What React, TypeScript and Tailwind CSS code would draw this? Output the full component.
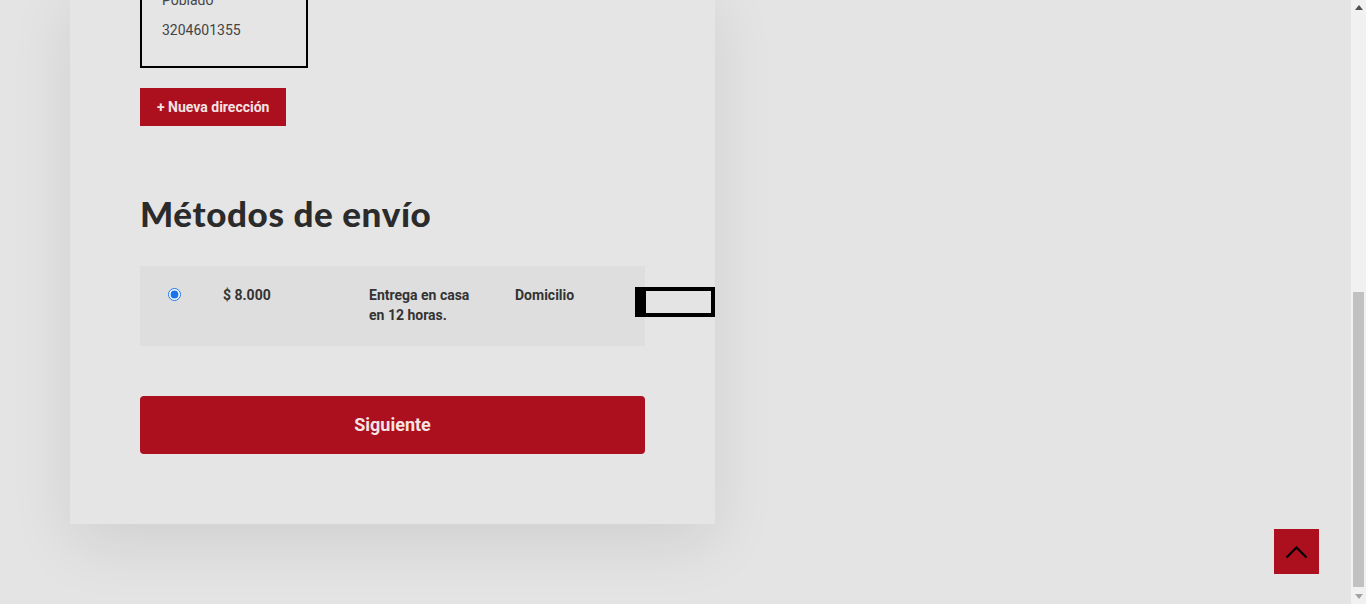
import { useState } from "react";

const font = { roboto: "font-['Roboto',_'Liberation_Sans',_sans-serif]" };

const ScrollTop = () => (
  <button className="absolute right-[32px] bottom-[30px] w-[45px] h-[45px] bg-[#ac0f1d] flex items-center justify-center">
    <svg width="23" height="14" viewBox="0 0 23 14" fill="none">
      <polyline points="1.5,12.5 11.5,2.5 21.5,12.5" stroke="#000" strokeWidth="2.2" />
    </svg>
  </button>
);

const Scrollbar = () => (
  <div className="w-[15px] shrink-0 bg-[#f1f1f1] flex flex-col">
    <div className="h-[15px] flex items-center justify-center">
      <svg width="8" height="5" viewBox="0 0 8 5">
        <polygon points="0,5 4,0 8,5" fill="#505050" />
      </svg>
    </div>
    <div className="flex-1 flex flex-col px-[2px] pt-[277px] pb-[2px]">
      <div className="h-[295px] bg-[#c1c1c1]" />
    </div>
    <div className="h-[15px] flex items-center justify-center">
      <svg width="8" height="5" viewBox="0 0 8 5">
        <polygon points="0,0 8,0 4,5" fill="#a3a3a3" />
      </svg>
    </div>
  </div>
);

const App = () => {
  const [shipping, setShipping] = useState("domicilio");

  return (
    <div className={`flex h-[604px] overflow-hidden bg-[#e4e4e4] ${font.roboto}`}>
      <div className="relative flex-1">
        <div className="pl-[70px] -mt-[17px]">
          <div className="w-[645px] bg-[#e5e5e5] px-[70px] pb-[70px] flex flex-col items-start shadow-[0_20px_60px_rgba(0,0,0,0.09)]">
            {/* Address card */}
            <div className="w-[168px] border-2 border-black px-5 pb-[21px] text-sm leading-[30px] text-[#444]">
              <p>Poblado</p>
              <p>3204601355</p>
            </div>

            <button className="mt-5 h-[38px] px-[17px] bg-[#ac0f1d] text-sm font-bold text-[#f3e3e4]">
              + Nueva dirección
            </button>

            <h2 className="mt-[66px] text-[35px] leading-[1.2] tracking-[0.6px] font-black text-[#2b2b2b] font-['Lato',_sans-serif]">
              Métodos de envío
            </h2>

            {/* Shipping methods */}
            <div className="mt-[32px] w-[505px] h-[80px] bg-[#dedede] flex items-start pl-[28px] pt-[19px] text-sm leading-[20px] font-bold text-[#333]">
              <div className="w-[55px] shrink-0 pt-[3px]">
                <input
                  type="radio"
                  name="shipping"
                  checked={shipping === "domicilio"}
                  onChange={() => setShipping("domicilio")}
                  className="block w-[13px] h-[13px] m-0 accent-[#1a73e8]"
                />
              </div>
              <div className="w-[146px] shrink-0">$ 8.000</div>
              <div className="w-[146px] shrink-0 pr-[30px]">Entrega en casa en 12 horas.</div>
              <div className="w-[120px] shrink-0">Domicilio</div>
              <div className="w-[80px] h-[30px] shrink-0 mt-[2px] border-4 border-l-[11px] border-black bg-[#e4e4e4]" />
            </div>

            <button className="mt-[50px] w-[505px] h-[58px] rounded-[4px] bg-[#ac0f1d] text-lg font-bold text-[#f3e3e4]">
              Siguiente
            </button>
          </div>
        </div>
        <ScrollTop />
      </div>
      <Scrollbar />
    </div>
  );
};

export default App;
